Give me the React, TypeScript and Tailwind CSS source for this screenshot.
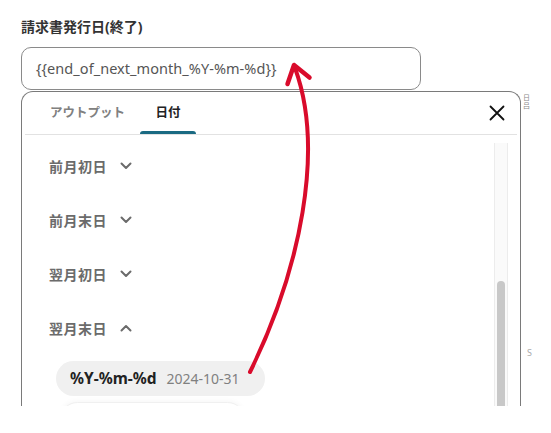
import React from "react";

const items = [
  { label: "前月初日", open: false },
  { label: "前月末日", open: false },
  { label: "翌月初日", open: false },
  { label: "翌月末日", open: true },
];

function Chevron({ up }: { up?: boolean }) {
  return (
    <svg width="12" height="8" viewBox="0 0 12 8" className="ml-[13px]">
      <path
        d={up ? "M1.5 6.5 6 2l4.5 4.5" : "M1.5 1.5 6 6l4.5-4.5"}
        fill="none"
        stroke="#6b6b6b"
        strokeWidth="2"
        strokeLinecap="round"
        strokeLinejoin="round"
      />
    </svg>
  );
}

export default function App() {
  return (
    <div className="relative w-[551px] h-[433px] overflow-hidden bg-white font-['Noto_Sans','Noto_Sans_CJK_JP',sans-serif]">
      <div className="flex">
        <div className="pl-[21px] pt-[18px] flex flex-col">
          <p className="text-[14px] leading-[18px] font-bold text-[#333]">請求書発行日(終了)</p>

          <div className="mt-[11px] w-[400px] h-[43px] rounded-[10px] border border-[#8a8a8a] flex items-center pl-[14px]">
            <span className="text-[14.5px] text-[#555] tracking-[0.05px]">{"{{end_of_next_month_%Y-%m-%d}}"}</span>
          </div>

          <div className="mt-[1px] w-[500px] h-[315px] border border-b-0 border-[#7a7a7a] rounded-t-[12px] overflow-hidden flex flex-col">
            <div className="mx-[3px] h-[43px] border-b border-[#e2e2e2] flex items-end pl-[25px] pr-[6px]">
              <div className="h-full flex items-center pt-[1px] text-[12.5px] font-bold text-[#808080]">アウトプット</div>
              <div className="ml-[15px] w-[56px] h-full flex flex-col items-center">
                <div className="flex-1 flex items-center pt-[4px] text-[12.5px] font-bold text-[#222]">日付</div>
                <div className="w-full h-[3px] rounded-t-[3px] bg-[#1a6a82]" />
              </div>
              <div className="flex-1" />
              <div className="h-full flex items-center pr-[6px]">
                <svg width="16" height="16" viewBox="0 0 16 16">
                  <path d="M1.5 1.5l13 13M14.5 1.5l-13 13" stroke="#111" strokeWidth="1.8" strokeLinecap="round" />
                </svg>
              </div>
            </div>

            <div className="flex flex-1 min-h-0">
              <div className="flex-1 pt-[4px] pl-[27px]">
                {items.map((it) => (
                  <div key={it.label} className="h-[54px] flex items-center">
                    <span className="text-[14px] font-bold text-[#6b6b6b] tracking-[0.5px]">{it.label}</span>
                    <Chevron up={it.open} />
                  </div>
                ))}
                <div className="mt-[6px] ml-[7px] w-[209px] h-[35px] rounded-full bg-[#f0f0f0] flex items-center pl-[14px]">
                  <span className="text-[15.5px] font-bold text-[#222]">%Y-%m-%d</span>
                  <span className="ml-[10px] text-[14px] text-[#808080]">2024-10-31</span>
                </div>
                <div className="mt-[6px] ml-[11px] w-[185px] h-[35px] rounded-full bg-white border border-[#f0f0f0] shadow-[0_0_6px_rgba(0,0,0,0.05)]" />
              </div>
              <div className="w-[14px] mt-[8px] mr-[12px] bg-[#fafafa] border-x border-[#ececec] flex flex-col items-center">
                <div className="h-[138px]" />
                <div className="w-[8px] flex-1 rounded-t-full bg-[#c8c8c8]" />
              </div>
            </div>
          </div>
        </div>

        <div className="flex flex-col pl-[2px]">
          <span className="mt-[94px] text-[7px] leading-[8px] text-[#888]">日</span>
          <span className="text-[7px] leading-[8px] text-[#888]">吕</span>
          <span className="mt-[236px] ml-[4px] text-[9px] text-[#aaa]">S</span>
        </div>
      </div>

      <svg className="absolute inset-0 pointer-events-none" width="551" height="433" viewBox="0 0 551 433">
        <path d="M250 372C300 270 325 150 295 68" fill="none" stroke="#d90b2b" strokeWidth="4" strokeLinecap="round" />
        <path d="M287.5 84 294 65 309.5 77.5" fill="none" stroke="#d90b2b" strokeWidth="4.5" strokeLinecap="round" strokeLinejoin="round" />
      </svg>
    </div>
  );
}
